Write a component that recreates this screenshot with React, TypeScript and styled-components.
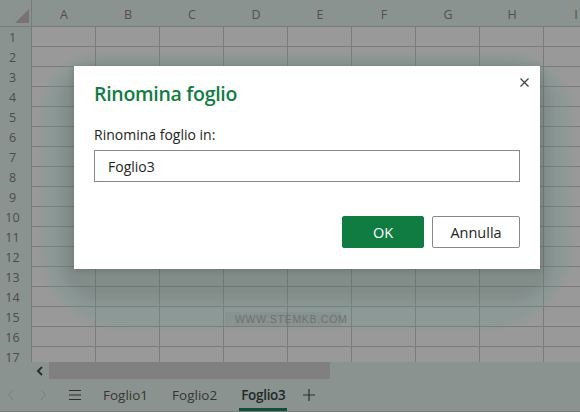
import React from 'react';
import styled, { createGlobalStyle } from 'styled-components';

const GlobalStyle = createGlobalStyle`
  html, body {
    margin: 0;
    padding: 0;
    background: #8b9390;
  }
  body {
    font-family: 'Open Sans', 'Liberation Sans', sans-serif;
  }
`;

const COLS = ['A', 'B', 'C', 'D', 'E', 'F', 'G', 'H', 'I'];
const ROWS = Array.from({ length: 17 }, (_, i) => i + 1);

const Screen = styled.div`
  position: relative;
  width: 580px;
  height: 412px;
  overflow: hidden;
  display: flex;
  flex-direction: column;
  background: #8b9390;
`;

const Sheet = styled.div`
  height: 362px;
  overflow: hidden;
  display: grid;
  grid-template-columns: 32px repeat(9, 64px);
  grid-template-rows: 27px repeat(17, 20px);
`;

const Corner = styled.div`
  background: #8b9390;
  border-bottom: 1px solid #7a7a7a;
  border-right: 1px solid #7a7a7a;
  position: relative;
  &::after {
    content: '';
    position: absolute;
    right: 2px;
    bottom: 3px;
    width: 0;
    height: 0;
    border-left: 14px solid transparent;
    border-bottom: 14px solid #797272;
  }
`;

const ColHead = styled.div`
  background: #8b9390;
  border-bottom: 1px solid #7a7a7a;
  color: #5a4c4c;
  font-size: 12.5px;
  display: flex;
  align-items: center;
  justify-content: center;
  position: relative;
  padding-top: 2px;
  &::after {
    content: '';
    position: absolute;
    right: -1px;
    top: 8px;
    bottom: 0;
    width: 1px;
    background: #7f8684;
  }
`;

const RowHead = styled.div`
  background: #8b9390;
  border-right: 1px solid #7a7a7a;
  color: #4e4a4a;
  font-size: 12.5px;
  display: flex;
  align-items: center;
  justify-content: center;
  padding-right: 6px;
  box-sizing: border-box;
`;

const Cell = styled.div`
  background: #999999;
  border-right: 1px solid #7b7b7b;
  border-bottom: 1px solid #7b7b7b;
`;

const ScrollRow = styled.div`
  height: 17px;
  display: flex;
  align-items: center;
  background: #8b9390;
`;

const ScrollArrow = styled.div`
  width: 49px;
  display: flex;
  justify-content: flex-end;
  padding-right: 5px;
  box-sizing: border-box;
`;

const Thumb = styled.div`
  width: 281px;
  height: 17px;
  background: #808080;
`;

const TabBar = styled.div`
  flex: 1;
  display: flex;
  align-items: stretch;
  border-bottom: 1px solid #7a7a7a;
  margin-left: -5px;
`;

const NavBtn = styled.div<{ $w?: number }>`
  width: ${({ $w }) => $w ?? 32}px;
  display: flex;
  align-items: center;
  justify-content: center;
`;

const Tab = styled.div<{ $active?: boolean }>`
  position: relative;
  display: flex;
  align-items: center;
  padding: 0 12px;
  font-size: 13.5px;
  color: ${({ $active }) => ($active ? '#1f2a28' : '#3a3333')};
  font-weight: ${({ $active }) => ($active ? 600 : 400)};
  letter-spacing: ${({ $active }) => ($active ? '-0.3px' : '0')};
  &::after {
    content: '';
    display: ${({ $active }) => ($active ? 'block' : 'none')};
    position: absolute;
    left: 10px;
    right: 10px;
    bottom: 0;
    height: 3px;
    background: #124d38;
  }
`;

const Watermark = styled.div`
  position: absolute;
  left: 225px;
  top: 312px;
  width: 116px;
  height: 14px;
  background: rgba(0, 0, 0, 0.04);
  color: #707070;
  font-family: 'Liberation Sans', sans-serif;
  font-size: 10.5px;
  letter-spacing: 0.7px;
  display: flex;
  align-items: center;
  padding-left: 10px;
  box-sizing: border-box;
  white-space: nowrap;
`;

const Halo = styled.div`
  position: absolute;
  left: 42px;
  top: 55px;
  width: 528px;
  height: 272px;
  border-radius: 60px 60px 80px 80px;
  background: rgba(110, 155, 145, 0.28);
  filter: blur(3px);
  &::after {
    content: '';
    position: absolute;
    left: 18px;
    top: 8px;
    right: 18px;
    bottom: 26px;
    border-radius: 40px;
    background: rgba(0, 0, 0, 0.08);
    filter: blur(4px);
  }
`;

const Dialog = styled.div`
  position: absolute;
  left: 74px;
  top: 66px;
  width: 466px;
  height: 203px;
  background: #ffffff;
  box-sizing: border-box;
  padding: 14px 20px 0 20px;
  display: flex;
  flex-direction: column;
  box-shadow: 0 2px 6px rgba(0, 0, 0, 0.15);
`;

const Header = styled.div`
  display: flex;
  justify-content: space-between;
  align-items: flex-start;
`;

const Title = styled.h1`
  margin: 0;
  font-family: 'Open Sans', sans-serif;
  font-weight: 600;
  font-size: 19.5px;
  color: #107c41;
  letter-spacing: -0.3px;
  line-height: 28px;
`;

const CloseBtn = styled.div`
  margin-top: -6px;
  margin-right: -12px;
  width: 16px;
  height: 16px;
  display: flex;
  align-items: center;
  justify-content: center;
`;

const Label = styled.label`
  margin-top: 18px;
  font-size: 14px;
  color: #252423;
  line-height: 18px;
`;

const Input = styled.div`
  margin-top: 6px;
  height: 32px;
  box-sizing: border-box;
  border: 1px solid #8a8886;
  padding: 0 13px;
  display: flex;
  align-items: center;
  font-size: 14px;
  color: #252423;
`;

const Actions = styled.div`
  margin-top: 34px;
  display: flex;
  justify-content: flex-end;
  gap: 8px;
`;

const Button = styled.div<{ $primary?: boolean }>`
  height: 32px;
  min-width: ${({ $primary }) => ($primary ? '82px' : '88px')};
  box-sizing: border-box;
  display: flex;
  align-items: center;
  justify-content: center;
  font-size: 14.5px;
  font-weight: 500;
  border-radius: 2px;
  background: ${({ $primary }) => ($primary ? '#107c41' : '#ffffff')};
  color: ${({ $primary }) => ($primary ? '#ffffff' : '#252423')};
  border: 1px solid ${({ $primary }) => ($primary ? '#107c41' : '#8a8886')};
`;

export default function App() {
  return (
    <>
      <GlobalStyle />
      <Screen>
        <Sheet>
          <Corner />
          {COLS.map((c) => (
            <ColHead key={c}>{c}</ColHead>
          ))}
          {ROWS.map((r) => (
            <React.Fragment key={r}>
              <RowHead>{r}</RowHead>
              {COLS.map((c) => (
                <Cell key={c} />
              ))}
            </React.Fragment>
          ))}
        </Sheet>
        <ScrollRow>
          <ScrollArrow>
            <svg width="8" height="10" viewBox="0 0 8 10">
              <path d="M6 1 L2 5 L6 9" fill="none" stroke="#2e2e2e" strokeWidth="2" />
            </svg>
          </ScrollArrow>
          <Thumb />
        </ScrollRow>
        <TabBar>
          <NavBtn>
            <svg width="8" height="12" viewBox="0 0 8 12">
              <path d="M6 1 L1.5 6 L6 11" fill="none" stroke="#7a807e" strokeWidth="1" />
            </svg>
          </NavBtn>
          <NavBtn>
            <svg width="8" height="12" viewBox="0 0 8 12">
              <path d="M2 1 L6.5 6 L2 11" fill="none" stroke="#7a807e" strokeWidth="1" />
            </svg>
          </NavBtn>
          <NavBtn>
            <svg width="14" height="12" viewBox="0 0 14 12">
              <path d="M1 1.5 H13 M1 6 H13 M1 10.5 H13" stroke="#2e2e2e" strokeWidth="1.2" />
            </svg>
          </NavBtn>
          <Tab>Foglio1</Tab>
          <Tab>Foglio2</Tab>
          <Tab $active>Foglio3</Tab>
          <NavBtn $w={24}>
            <svg width="14" height="14" viewBox="0 0 14 14">
              <path d="M7 1 V13 M1 7 H13" stroke="#2e2e2e" strokeWidth="1.2" />
            </svg>
          </NavBtn>
        </TabBar>

        <Halo />
        <Watermark>WWW.STEMKB.COM</Watermark>

        <Dialog>
          <Header>
            <Title>Rinomina foglio</Title>
            <CloseBtn>
              <svg width="9" height="9" viewBox="0 0 9 9">
                <path d="M0.5 0.5 L8.5 8.5 M8.5 0.5 L0.5 8.5" stroke="#3b3a39" strokeWidth="1.1" />
              </svg>
            </CloseBtn>
          </Header>
          <Label>Rinomina foglio in:</Label>
          <Input>Foglio3</Input>
          <Actions>
            <Button $primary>OK</Button>
            <Button>Annulla</Button>
          </Actions>
        </Dialog>
      </Screen>
    </>
  );
}
